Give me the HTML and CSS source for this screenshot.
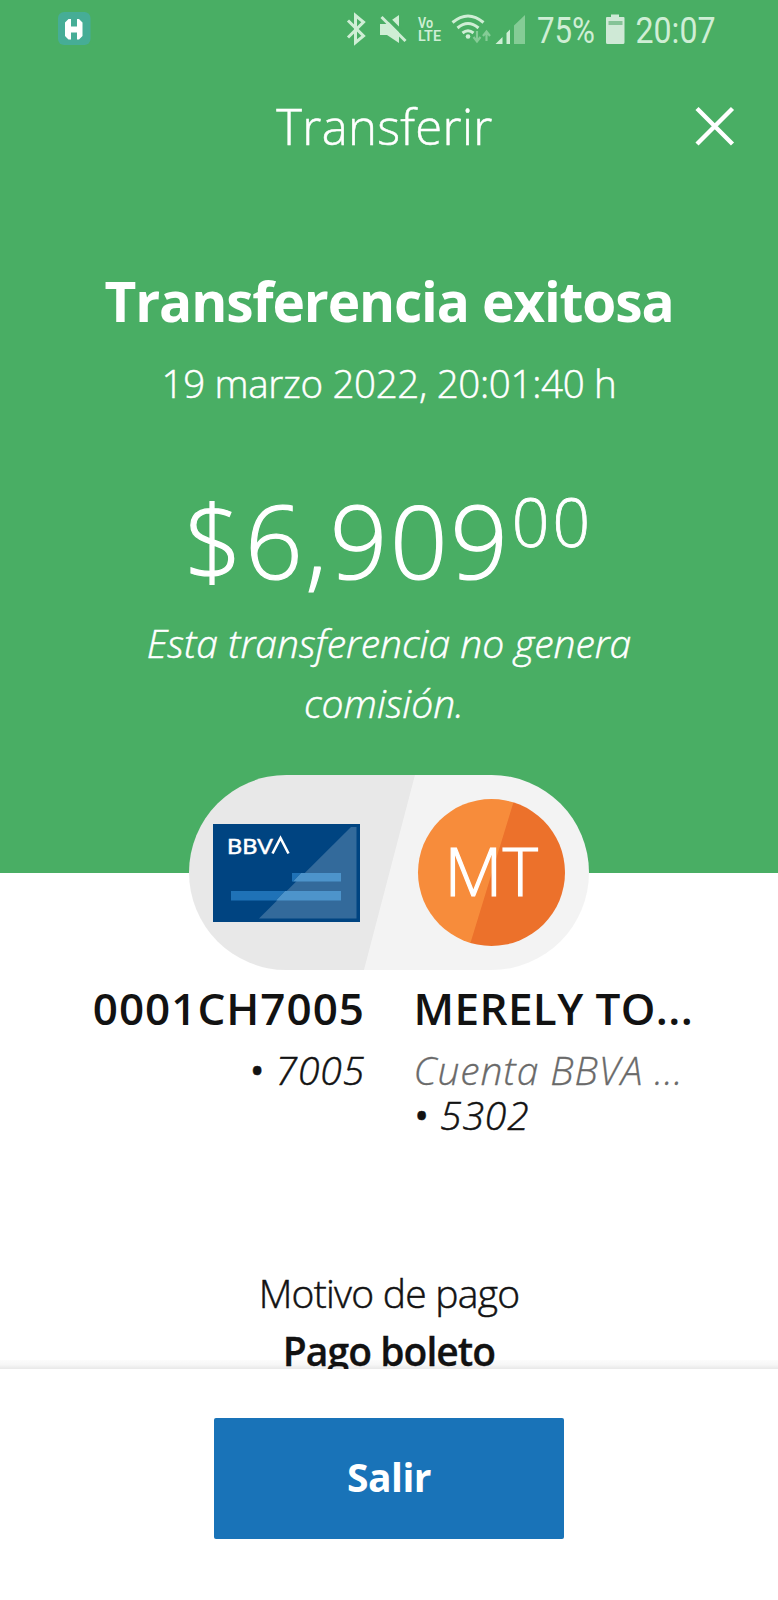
FILE: index.html
```html
<!DOCTYPE html>
<html lang="es">
<head>
<meta charset="utf-8">
<title>Transferir</title>
<link rel="stylesheet" href="styles.css">
</head>
<body>
<main class="screen">
  <header class="hero">
    <div class="status">
      <svg class="app-badge" width="36" height="36" viewBox="0 0 36 36">
        <rect x="1" y="1" width="32.500" height="33" rx="6" fill="#46ad96"/>
        <path d="M8 11.500L11.500 8H14v7.500h6V8h2l3.500 3.500V25L22 28.500h-2v-7h-6v7h-2.500L8 25z" fill="#fff"/>
      </svg>
      <svg class="icons" width="180" height="60" viewBox="0 0 180 60">
        <path d="M3 20.500L18.500 36l-8 6.500V15.500l8 6.500L3 37.500" fill="none" stroke="#cfeed5" stroke-width="3"/>
        <path d="M35 24h6l13-9v28l-12-8h-7z" fill="#cfeed5"/>
        <path d="M37 12.500L64 39.500" stroke="#49ae64" stroke-width="4"/>
        <path d="M36.500 17L60.500 41" stroke="#cfeed5" stroke-width="3"/>
        <text x="73" y="27.500" class="tiny" textLength="15" lengthAdjust="spacingAndGlyphs">Vo</text>
        <text x="73" y="40.500" class="tiny" textLength="23" lengthAdjust="spacingAndGlyphs">LTE</text>
        <g fill="none" stroke="#cfeed5" stroke-width="3">
          <path d="M107.500 22.500q15.500-13 31 0"/>
          <path d="M112.500 28q10.500-9 21 0"/>
          <path d="M117.500 33q5.500-4.500 11 0"/>
        </g>
        <circle cx="123" cy="36.500" r="2.300" fill="#cfeed5"/>
        <path d="M132 31v10m-3.500-4l3.500 4.500 3.500-4.500M141.500 41V32m-3.500 4l3.500-4.500 3.500 4.500" fill="none" stroke="#85cc96" stroke-width="2.200"/>
        <path d="M150.500 44h7v-7zM161.500 44h3.500V29.500L161.500 33z" fill="#cfeed5"/>
        <path d="M169 44V25.500L180 15v29z" fill="#85cc96"/>
      </svg>
      <svg class="meter" width="190" height="60" viewBox="0 0 190 60">
        <text x="0" y="43" class="clock" textLength="58" lengthAdjust="spacingAndGlyphs">75%</text>
        <path d="M69 18q0-1 1-1h4v-2.500h8V17h4.500q1 0 1 1v24.500q0 1.500-1.500 1.500H70.500q-1.500 0-1.500-1.500z" fill="#cfe9d6"/>
        <path d="M71.500 21h14v4h-14z" fill="#85c397"/>
        <text x="98.500" y="43" class="clock" textLength="80" lengthAdjust="spacingAndGlyphs">20:07</text>
      </svg>
    </div>
    <div class="bar">
      <div class="bar-title">Transferir</div>
      <svg class="close" width="40" height="40" viewBox="0 0 40 40"><path d="M2 2.500l35.500 35.500M37.500 2.500l-35.500 35.500" stroke="#fff" stroke-width="4.400"/></svg>
    </div>
    <h1 class="title">Transferencia exitosa</h1>
    <p class="date">19 marzo 2022, 20:01:40 h</p>
    <div class="amount"><span class="whole">$6,909</span><span class="cents">00</span></div>
    <p class="note">Esta transferencia no genera<br>comisión.&nbsp;</p>
  </header>
  <section class="pill">
    <svg class="card" width="147" height="98" viewBox="0 0 147 98">
      <rect width="147" height="98" fill="#004481"/>
      <path d="M46 94.500L138 3h5.500v91.500z" fill="#336a9b"/>
      <path d="M18 67h54l-9 9.500H18zM79 49h9l-8 8.500h-1z" fill="#1f72b7"/>
      <path d="M72 67h56v9.500H63zM88 49h40v8.500H80z" fill="#4d94cb"/>
      <text x="14" y="30" class="brand" textLength="46" lengthAdjust="spacingAndGlyphs">BBV</text>
      <path d="M59.500 29.500L67.500 14l8 15.500" fill="none" stroke="#fff" stroke-width="2.600"/>
    </svg>
    <div class="avatar">MT</div>
  </section>
  <section class="parties">
    <div class="from">
      <div class="name name-from">0001CH7005</div>
      <div class="sub"><span class="dot">•</span> 7005</div>
    </div>
    <div class="to">
      <div class="name name-to">MERELY TO...</div>
      <div class="sub bank">Cuenta BBVA ...</div>
      <div class="sub"><span class="dot">•</span> 5302</div>
    </div>
  </section>
  <section class="reason">
    <div class="reason-label">Motivo de pago</div>
    <div class="reason-value">Pago boleto</div>
  </section>
</main>
<footer class="footer"><button class="exit">Salir</button></footer>
</body>
</html>
```
FILE: styles.css
```css
* { box-sizing: border-box; }
body {
  margin: 0;
  width: 778px;
  height: 1600px;
  overflow: hidden;
  background: #fff;
  color: #121212;
  font-family: "Open Sans", "Noto Sans", sans-serif;
}
h1, p { margin: 0; }
.screen { height: 1369px; overflow: hidden; }
.hero {
  height: 873px;
  background: #49ae64;
  color: #fff;
  text-align: center;
}
.status { display: flex; height: 60px; padding-left: 57px; }
.app-badge { flex: none; margin-top: 11px; }
.icons { flex: none; margin-left: 252px; }
.meter { flex: none; margin-left: 12px; }
.tiny { font: 600 14px Roboto, sans-serif; fill: #cfeed5; }
.clock { font: 400 36px Roboto, sans-serif; fill: #cfeed5; }
.bar-title, .date, .note, .sub, .reason-label {
  font-weight: 300;
  -webkit-text-stroke: 0.500px currentColor;
}
.bar {
  display: grid;
  grid-template-columns: 84px 1fr 84px;
  align-items: center;
  height: 130px;
  padding-right: 9px;
}
.bar-title {
  grid-column: 2;
  padding-top: 2px;
  font-size: 49px;
  line-height: 128px;
  letter-spacing: 0.300px;
}
.close { margin: 2px 0 0 10px; }
.title {
  margin-top: 71px;
  font-size: 55px;
  font-weight: 700;
  line-height: 80px;
  letter-spacing: -1.150px;
}
.date {
  margin-top: 12px;
  font-size: 38.500px;
  line-height: 60px;
  letter-spacing: -0.320px;
}
.amount {
  display: flex;
  justify-content: center;
  margin-top: 67px;
  height: 120px;
  font-weight: 300;
}
.whole { font-size: 101px; line-height: 120px; letter-spacing: 2.700px; -webkit-text-stroke: 1.200px #fff; }
.cents { margin: 11px 0 0 1px; font-size: 66px; line-height: 60px; letter-spacing: 3.200px; -webkit-text-stroke: 0.800px #fff; }
.note {
  margin-top: 13px;
  font-size: 39px;
  font-style: italic;
  line-height: 60px;
}
.pill {
  position: relative;
  display: flex;
  align-items: center;
  justify-content: space-between;
  width: 400px;
  height: 195px;
  margin: -98px 0 0 189px;
  padding: 0 24px;
  border-radius: 98px;
  background: linear-gradient(104.660deg, #e8e8e8 50%, #f3f3f3 50.200%);
}
.card { display: block; }
.brand { font: 500 21.500px Lato, sans-serif; fill: #fff; stroke: #fff; stroke-width: 0.300px; }
.avatar {
  width: 147px;
  height: 147px;
  border-radius: 50%;
  background: linear-gradient(107deg, #f78c3b 50%, #ec712b 50.500%);
  color: #fff;
  font-size: 67px;
  font-weight: 300;
  line-height: 143px;
  letter-spacing: 0.500px;
  text-align: center;
  -webkit-text-stroke: 1.200px #fff;
}
.parties {
  display: grid;
  grid-template-columns: 365px 1fr;
  column-gap: 48.500px;
  margin-top: 7.500px;
}
.from { text-align: right; }
.name { margin-bottom: 9px; font-size: 44px; font-weight: 600; line-height: 60px; white-space: nowrap; }
.name-from { letter-spacing: 1px; }
.name-to { letter-spacing: 0.400px; }
.sub { font-size: 39px; font-style: italic; line-height: 45px; letter-spacing: 0.900px; }
.dot { font-weight: 400; }
.bank { color: #6a6a6a; -webkit-text-stroke-width: 0.300px; }
.reason { margin-top: 127.500px; text-align: center; font-size: 39px; line-height: 58px; }
.reason-label { letter-spacing: -0.750px; }
.reason-value { font-weight: 600; letter-spacing: -0.950px; -webkit-text-stroke: 0.300px #121212; }
.footer {
  position: relative;
  display: flex;
  justify-content: center;
  height: 231px;
  padding-top: 49px;
  background: #fff;
}
.footer::before {
  content: "";
  position: absolute;
  left: 0;
  right: 0;
  bottom: 100%;
  height: 9px;
  background: linear-gradient(rgba(0, 0, 0, 0.010), rgba(0, 0, 0, 0.030) 50%, rgba(0, 0, 0, 0.090));
}
.exit {
  width: 350px;
  height: 121px;
  padding: 0 0 4px;
  border: 0;
  border-radius: 2px;
  background: #1973b8;
  color: #fff;
  font: 700 39px "Open Sans", sans-serif;
  letter-spacing: -0.500px;
}
```
